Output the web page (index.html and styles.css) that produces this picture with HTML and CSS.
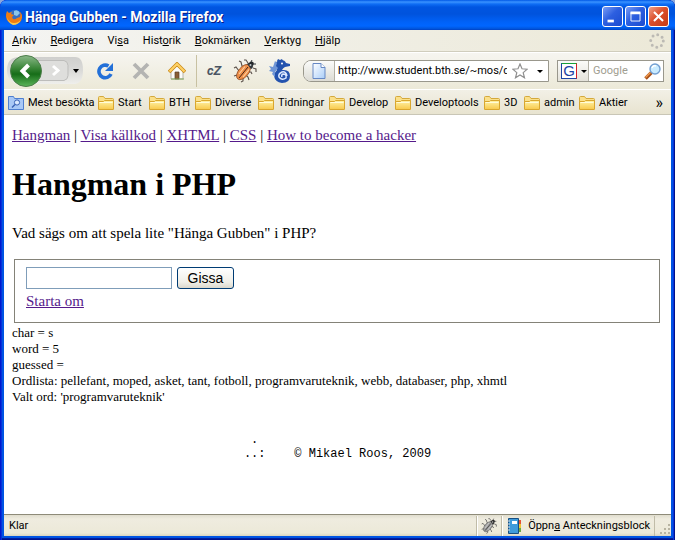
FILE: index.html
```
<!DOCTYPE html>
<html lang="sv">
<head>
<meta charset="utf-8">
<title>Hänga Gubben - Mozilla Firefox</title>
<link rel="stylesheet" href="styles.css">
</head>
<body>
<svg class="defs" aria-hidden="true">
  <defs>
    <linearGradient id="folderFill" x1="0" y1="0" x2="0" y2="1"><stop offset="0" stop-color="#fff3a8"/><stop offset="1" stop-color="#f8c94b"/></linearGradient>
    <linearGradient id="greenFill" x1="0" y1="0" x2="0" y2="1"><stop offset="0" stop-color="#8cb98a"/><stop offset=".4" stop-color="#3c873a"/><stop offset=".6" stop-color="#166d18"/><stop offset="1" stop-color="#5cb55b"/></linearGradient>
    <linearGradient id="keyFill" x1="0" y1="0" x2="0" y2="1"><stop offset="0" stop-color="#cfcfcd"/><stop offset=".5" stop-color="#dadad8"/><stop offset="1" stop-color="#efefec"/></linearGradient>
    <linearGradient id="pageFill" x1="0" y1="0" x2="1" y2="1"><stop offset="0" stop-color="#fff"/><stop offset="1" stop-color="#a9cdf8"/></linearGradient>
    <symbol id="folder" viewBox="0 0 16 14">
      <path d="M.5 13V1.500q0-1 1-1h4l1.500 2H14.500q1 0 1 1V13z" fill="#fbe08a" stroke="#d4a93c"/>
      <path d="M.5 5.500h5l1-1h9V13q0 .5-.5.500H1q-.5 0-.5-.5z" fill="url(#folderFill)" stroke="#d9a62e"/>
      <path d="M1.500 6.500h13" stroke="#fffbd8"/>
    </symbol>
    <symbol id="bug" viewBox="0 0 24 24">
      <path d="M6 2l2 1 1 4 2 1M1 9l2-1 3 4 2 0M1 17l3-1 2 1M8 23l2-1 0-3M16 21l-1-3-2-2M19 15l-1-2-2 0M15 4l-2-3-2 0M20 9l3 1 0 3" fill="none" stroke="#5a504a" stroke-width="1.100"/>
      <ellipse cx="10.500" cy="13" rx="9" ry="5" transform="rotate(-50 10.500 13)" fill="#ee8f4a" stroke="#8a431c" stroke-width=".7"/>
      <path d="M6 19L15 8" stroke="#4a2312"/>
      <path d="M6 15l6-7.500M10 18l6-7.500" stroke="#ffd0a0" stroke-width="1.100"/>
      <path d="M14 5q2-2 4-1 2 1 2 4-1 2-2 2z" fill="#35393d"/>
      <circle cx="18.500" cy="4.800" r="2.300" fill="#24282c"/>
      <circle cx="17.500" cy="6" r="1" fill="#c4ccd0"/>
      <path d="M18 3l1-2M20 5l3 0" stroke="#35393d"/>
    </symbol>
  </defs>
</svg>
<div class="window">
  <header class="titlebar">
    <svg class="fox" viewBox="0 0 16 16" aria-hidden="true"><circle cx="8.500" cy="7.500" r="6.500" fill="#376fc1"/><path d="M8 2q4-2 6 2l-3 3-3-1z" fill="#8dc7e8"/><path d="M1 2l2 2 3-1-1 2 3 1-2 2 1 2q2 1 4-1l3-1q1-4-1-6 4 3 3 7-1 6-8 6-7-1-8-7Q0 4 1 2z" fill="#ef7c13"/><path d="M1 8q2 6 7 6 5 0 7-4-2 6-8 6-5-2-6-8z" fill="#fbc94d"/></svg>
    <h2 class="caption">Hänga Gubben - Mozilla Firefox</h2>
    <button class="winbtn" aria-label="Minimera"><svg viewBox="0 0 21 21"><path d="M5 14h7v3H5z" fill="#fff"/></svg></button>
    <button class="winbtn" aria-label="Maximera"><svg viewBox="0 0 21 21"><path d="M5.500 6h10v9.500h-10z" fill="none" stroke="#fff"/><path d="M5 5h11v3H5z" fill="#fff"/></svg></button>
    <button class="winbtn close" aria-label="Stäng"><svg viewBox="0 0 21 21"><path d="M5.500 5.500l10 10M15.500 5.500l-10 10" stroke="#fff" stroke-width="2.300"/></svg></button>
  </header>

  <nav class="menubar">
    <button><u>A</u>rkiv</button><button><u>R</u>edigera</button><button>Vi<u>s</u>a</button><button>Hist<u>o</u>rik</button><button><u>B</u>okmärken</button><button><u>V</u>erktyg</button><button><u>H</u>jälp</button>
    <svg class="throbber" viewBox="0 0 16 16" aria-hidden="true"><circle cx="8" cy="8" r="6.300" fill="none" stroke="#bcbab4" stroke-width="3" stroke-linecap="round" stroke-dasharray="0 4.948"/></svg>
  </nav>

  <div class="toolbar">
    <div class="history">
      <svg viewBox="0 0 78 34" aria-hidden="true">
        <path d="M14 3h55q8 0 8 13t-8 14H14Q1 29 1 16T14 3z" fill="url(#keyFill)"/>
        <path d="M32 6.500h26q4 1 4 5v10q0 4-4 5H32z" fill="#dededc" stroke="#bdbdbb"/>
        <path d="M47 12l5 4.500-5 4.500" fill="none" stroke="#fff" stroke-width="3"/>
        <circle cx="20" cy="17" r="15.500" fill="url(#greenFill)" stroke="#4c7d4a"/>
        <path d="M22.500 11l-6 6 6 6" fill="none" stroke="#fff" stroke-width="4"/>
        <path d="M67 15h6l-3 4z" fill="#000"/>
      </svg>
      <button class="hit back" aria-label="Bakåt"></button><button class="hit fwd" aria-label="Framåt"></button>
    </div>
    <button class="tool" aria-label="Uppdatera"><svg viewBox="0 0 18 18"><path d="M12.500 4A6.300 6.300 0 1 0 15 12" fill="none" stroke="#2370d8" stroke-width="3.600"/><path d="M17 1v8H9z" fill="#2370d8"/></svg></button>
    <button class="tool" aria-label="Stoppa"><svg viewBox="0 0 18 18"><path d="M2 2l14 14M16 2L2 16" stroke="#b4b4b2" stroke-width="3.800"/></svg></button>
    <button class="tool" aria-label="Hem"><svg viewBox="0 0 18 18"><path d="M3 9v8h12V9L9 4z" fill="#fbfbf8" stroke="#b7b4ad"/><path d="M7 10h4v7H7z" fill="#895d35" stroke="#58402c" stroke-width=".7"/><path d="M1 10l8-8 8 8" fill="none" stroke="#c98918" stroke-width="3.600"/><path d="M1.500 9.500L9 2l7.500 7.500" fill="none" stroke="#ffd164" stroke-width="2.200"/><path d="M3 17h13" stroke="#81a85d"/></svg></button>
    <span class="rule"></span>
    <button class="tool cz" aria-label="cZ">cZ</button>
    <button class="tool big" aria-label="Firebug"><svg><use href="#bug"/></svg></button>
    <button class="tool big" aria-label="Sjöhäst"><svg viewBox="0 0 24 24"><path d="M8 4q1-3 5-3 4 0 5 3l4 1v2l-5 1q-2 1-3 3 8-1 8 6 0 7-8 7-7-1-8-7 0-3 3-6Q7 8 8 4z" fill="#2453ae"/><path d="M7 2l2 2-1 3 2 2-3 4 0 5-3-3 1-2-4-1 2-2-2-3 4 1z" fill="#6f95d6"/><path d="M9 2l1-2 2 1 2-1 1 2" fill="#2453ae"/><path d="M19 17q-1-5-5-4-4 2-3 5 3 4 7 1 1-4-3-4-2 1-1 3" fill="none" stroke="#dce9ff" stroke-width="1.500"/><circle cx="14" cy="4.500" r="1" fill="#fff"/></svg></button>
    <div class="address">
      <span class="pageicon"><svg viewBox="0 0 14 16" aria-hidden="true"><path d="M1 .5h8l4 4v11H1z" fill="url(#pageFill)" stroke="#6688c4"/><path d="M9 .5v4h4" fill="#fff" stroke="#6688c4"/></svg></span>
      <input type="text" aria-label="Adress" value="http://www.student.bth.se/~mos/dbwebb">
      <svg class="star" viewBox="0 0 16 16" aria-hidden="true"><path d="M8 1l2 4.800 5.200.4-4 3.400 1.300 5.200L8 12l-4.500 2.800 1.300-5.200-4-3.400L6 5.800z" fill="#fff" stroke="#8f8f8f" stroke-width="1.200"/></svg>
      <button class="drop" aria-label="Visa historik"></button>
    </div>
    <div class="search">
      <button class="engine" aria-label="Sökmotor"><span class="g">G</span><i class="tri"></i></button>
      <input type="text" aria-label="Sök" placeholder="Google">
      <svg class="lens" viewBox="0 0 17 17" aria-hidden="true"><path d="M1.500 15.500l6-6" stroke="#a84f16" stroke-width="3.600"/><path d="M1.500 14.500l5-5" stroke="#ef9a50" stroke-width="1.500"/><circle cx="11" cy="6" r="5" fill="#c9ebff" stroke="#739fd1" stroke-width="1.400"/><path d="M8 5q1-3 4-2" fill="none" stroke="#fff" stroke-width="1.500"/></svg>
    </div>
  </div>

  <nav class="bookmarks">
    <button><svg viewBox="0 0 16 14"><path d="M.5 13.500V.5h5l1 2h9v11z" fill="#a9c8f6" stroke="#4f7fd0"/><circle cx="9" cy="6.500" r="2.600" fill="#dceaff" stroke="#3a62b5"/><path d="M7 8.500L4 11.500" stroke="#3a62b5" stroke-width="1.500"/></svg>Mest besökta</button>
    <button><svg><use href="#folder"/></svg>Start</button>
    <button><svg><use href="#folder"/></svg>BTH</button>
    <button><svg><use href="#folder"/></svg>Diverse</button>
    <button><svg><use href="#folder"/></svg>Tidningar</button>
    <button><svg><use href="#folder"/></svg>Develop</button>
    <button><svg><use href="#folder"/></svg>Developtools</button>
    <button><svg><use href="#folder"/></svg>3D</button>
    <button><svg><use href="#folder"/></svg>admin</button>
    <button><svg><use href="#folder"/></svg>Aktier</button>
    <button class="more" aria-label="Fler bokmärken">»</button>
  </nav>

  <main class="page">
    <div><a href="#">Hangman</a> | <a href="#">Visa källkod</a> | <a href="#">XHTML</a> | <a href="#">CSS</a> | <a href="#">How to become a hacker</a></div>
    <h1>Hangman i PHP</h1>
    <p>Vad sägs om att spela lite "Hänga Gubben" i PHP?</p>
    <form>
      <fieldset>
        <div class="guess"><input type="text" aria-label="Gissning"><button type="button">Gissa</button></div>
        <a href="#">Starta om</a>
      </fieldset>
    </form>
    <div class="debug">char = s<br>word = 5<br>guessed =<br>Ordlista: pellefant, moped, asket, tant, fotboll, programvaruteknik, webb, databaser, php, xhmtl<br>Valt ord: 'programvaruteknik'</div>
    <pre> .
..:    © Mikael Roos, 2009</pre>
  </main>

  <footer class="status">
    <span class="state">Klar</span>
    <span class="cell"><svg class="graybug" role="img" aria-label="Firebug"><use href="#bug"/></svg></span>
    <button class="cell notes"><svg viewBox="0 0 16 16"><path d="M2.500 .5h10v15h-10z" fill="#3f9bdb" stroke="#174f83"/><path d="M13 2h2v4h-2z" fill="#e45135"/><path d="M13 6h2v4h-2z" fill="#f2c435"/><path d="M13 10h2v4h-2z" fill="#68a943"/><path d="M6 3h5v3H6z" fill="#fff"/><path d="M1 3h3M1 6h3M1 9h3M1 12h3" stroke="#ddd"/></svg><span>Öppn<u>a</u> Anteckningsblock</span></button>
    <svg class="grip" viewBox="0 0 12 12" aria-hidden="true"><path d="M9 1h2v2H9zM5 5h2v2H5zM9 5h2v2H9zM1 9h2v2H1zM5 9h2v2H5zM9 9h2v2H9z" fill="#b8b4a2"/></svg>
  </footer>
</div>
</body>
</html>
```
FILE: styles.css
```
* { box-sizing: border-box; }
html { height: 100%; background: #8aa7dc; }
body { margin: 0; min-height: 100%; display: flex; font: 11px/16px Roboto, sans-serif; color: #000; }
button, input { font: inherit; color: inherit; border: 0; margin: 0; padding: 0; background: none; border-radius: 0; }
svg { display: block; flex: none; }
.defs { position: absolute; width: 0; height: 0; }
.window {
  flex: 1; min-width: 0; min-height: 100vh; display: flex; flex-direction: column;
  padding: 0 4px 4px; border-radius: 7px 7px 0 0; background: #0054e3;
  box-shadow: inset 1px 0 #0019cf, inset 2px 0 #0831d9, inset -1px 0 #00138c, inset -2px 0 #0831d9, inset 0 -1px #00138c, inset 0 -2px #001ea0;
}
.titlebar {
  height: 30px; margin: 0 -4px; padding: 3px 6px 0 6px; display: flex; align-items: center; gap: 2px;
  border-radius: 7px 7px 0 0;
  background: linear-gradient(#0058e6 0, #3a93ff 2px, #0f6ef5 4px, #0055e1 7px, #0053dd 14px, #0062f8 22px, #0066ff 26px, #0053d8 29px, #003dc0 30px);
}
.fox { width: 16px; height: 16px; }
.caption { flex: 1; margin: 0 0 0 1px; font: bold 14px/18px Roboto, sans-serif; color: #fff; text-shadow: 1px 1px #0a1883; white-space: nowrap; }
.winbtn { width: 21px; height: 21px; border: 1px solid #fff; border-radius: 3px; background: linear-gradient(135deg, #7a9df5, #2d5fe0 45%, #1a4bd0); }
.winbtn svg { width: 19px; height: 19px; }
.close { background: linear-gradient(135deg, #f0a088, #dc4f2b 45%, #c43a16); }

.menubar { height: 22px; display: flex; align-items: center; background: linear-gradient(90deg, #f4f4f2, #ece9d8); border-bottom: 1px solid #d0cdbd; }
.menubar button { padding: 0 6px 0 8px; white-space: nowrap; }
.throbber { width: 16px; height: 16px; margin: 0 6px 0 auto; }

.toolbar { height: 37px; display: flex; align-items: center; background: linear-gradient(#f6f5f0, #ece9d8); border-top: 1px solid #fff; padding: 0 7px 0 2px; }
.history { position: relative; width: 78px; height: 34px; margin-right: 12px; }
.history svg { width: 78px; height: 34px; }
.hit { position: absolute; top: 3px; height: 28px; width: 30px; }
.back { left: 4px; }
.fwd { left: 36px; }
.tool { width: 18px; height: 18px; flex: none; margin-right: 18px; }
.tool svg { width: 18px; height: 18px; }
.rule { width: 1px; height: 32px; background: #c8c1a2; margin: 0 8px 0 -8px; }
.cz { font-weight: bold; font-style: italic; font-size: 13px; line-height: 18px; color: #4b5563; margin-right: 10px; }
.tool.big { width: 24px; height: 24px; margin-right: 11px; }
.big svg { width: 24px; height: 24px; }
.address { flex: 1; min-width: 0; height: 22px; display: flex; align-items: center; border: 1px solid #99978c; border-radius: 8px 0 0 8px; background: #fff; }
.pageicon { width: 31px; height: 20px; display: flex; align-items: center; justify-content: center; border-right: 1px solid #b3b1a6; border-radius: 7px 0 0 7px; background: linear-gradient(#fbfbf9, #dddcd5); }
.pageicon svg { width: 14px; height: 16px; }
.address input { flex: 1; min-width: 0; padding-left: 3px; }
.star { width: 16px; height: 16px; margin: 0 4px 0 5px; }
.drop { width: 16px; height: 20px; display: grid; place-items: center; }
.drop::before, .tri { content: ""; border: 3px solid transparent; border-top-color: #000; border-bottom: 0; }
.search { width: 107px; height: 22px; margin-left: 8px; display: flex; align-items: center; border: 1px solid #99978c; background: #fff; }
.engine { width: 31px; height: 20px; display: flex; align-items: center; gap: 4px; padding-left: 3px; border-right: 1px solid #b3b1a6; background: linear-gradient(#fbfbf9, #e4e2da); }
.g { width: 16px; height: 16px; border: 1px solid; border-color: #18a038 #d51f28 #1c44a5 #1c44a5; background: #fff; color: #1c44a5; font: 15px/14px "Liberation Sans", sans-serif; text-align: center; }
.search input { flex: 1; min-width: 0; padding-left: 4px; }
.search input::placeholder { color: #a09d90; opacity: 1; }
.lens { width: 17px; height: 17px; margin-right: 2px; }

.bookmarks {
  height: 26px; display: grid; align-items: center;
  grid-template-columns: 90px 51px 46px 63px 71px 66px 89px 40px 55px 60px 1fr;
  padding: 2px 8px 0 4px; background: linear-gradient(#f2f0e6, #e8e4d0);
  border-top: 1px solid #fff; border-bottom: 1px solid #c9c6b6;
}
.bookmarks button { display: flex; align-items: center; gap: 4px; white-space: nowrap; }
.bookmarks svg { width: 16px; height: 14px; }
.bookmarks .more { justify-self: end; font-size: 16px; }

.page { flex: 1; padding: 10px 8px 8px; background: #fff; font: 15px/20px "Liberation Serif", serif; }
.page a { color: #551a8b; }
.page h1 { font-size: 32px; line-height: 38px; margin: 20px 0; }
.page p { margin: 0 0 16px; }
.page fieldset { min-width: 0; height: 64px; margin: 0 3px 0 2px; padding: 7px 11px; border: 1px solid #848278; }
.guess { display: flex; gap: 5px; margin-bottom: 2px; }
.guess input { width: 146px; height: 22px; border: 1px solid #7f9db9; padding: 0 3px; }
.guess button { width: 57px; height: 22px; border: 1px solid #003c74; border-radius: 3px; background: linear-gradient(#fff, #f0efe8 70%, #dcd8cc); font: 14px/18px "Liberation Sans", sans-serif; }
.debug { margin-top: 2px; font-size: 13px; line-height: 16px; }
.page pre { width: max-content; margin: 28px auto 0; font: 12px/14px "Liberation Mono", monospace; }

.status { height: 22px; display: flex; align-items: center; background: linear-gradient(#e0ddce, #efecdf 4px, #ece9d8 18px, #d9d5c0); border-top: 1px solid #8e8b79; padding-left: 5px; }
.state { flex: 1; }
.cell { height: 20px; display: flex; align-items: center; border-left: 1px solid #c0bca8; box-shadow: inset 1px 0 #fff; padding: 0 4px; }
.graybug { width: 16px; height: 16px; filter: grayscale(1); }
.notes { gap: 6px; border-right: 1px solid #c0bca8; white-space: nowrap; }
.notes svg { width: 16px; height: 16px; }
.grip { width: 12px; height: 12px; margin: 6px 0 0 4px; }
```
